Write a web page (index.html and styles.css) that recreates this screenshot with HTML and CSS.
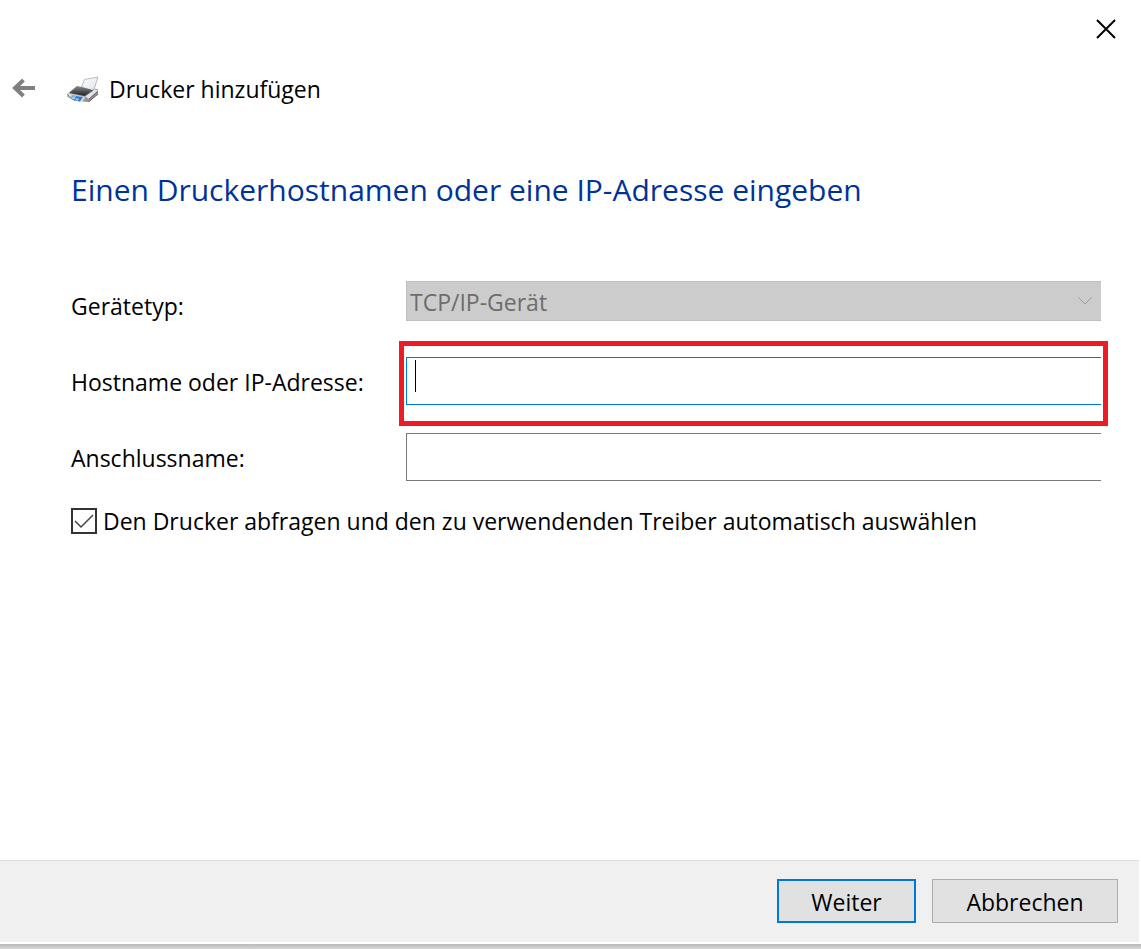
FILE: index.html
```html
<!DOCTYPE html>
<html lang="de">
<head>
    <meta charset="UTF-8">
    <meta name="viewport" content="width=device-width, initial-scale=1.0">
    <title>Drucker hinzufügen</title>
    <link rel="stylesheet" href="styles.css">
</head>
<body>

    <form class="dialog">
        <div class="title-bar">
            <button type="button" class="icon-button close" aria-label="Schließen">
                <svg width="20" height="20" viewBox="0 0 20 20">
                    <path d="M1 1L19 19M19 1L1 19" fill="none" stroke="#000" stroke-width="2"/>
                </svg>
            </button>
        </div>

        <header class="header">
            <button type="button" class="icon-button back" aria-label="Zurück">
                <svg width="24" height="20" viewBox="0 0 24 20">
                    <path d="M11.5 1L3 9L11.5 17M3 9H23" fill="none" stroke="#808080" stroke-width="4"/>
                </svg>
            </button>
            <svg class="printer" width="34" height="28" viewBox="0 0 34 28">
                <defs>
                    <linearGradient id="paper" x1="0" y1="0" x2="1" y2="1">
                        <stop offset="0" stop-color="#ffffff"/>
                        <stop offset="1" stop-color="#dfe1e4"/>
                    </linearGradient>
                    <linearGradient id="lid" x1="0" y1="0" x2="0" y2="1">
                        <stop offset="0" stop-color="#8b8b8b"/>
                        <stop offset="1" stop-color="#202020"/>
                    </linearGradient>
                    <linearGradient id="side" x1="0" y1="0" x2="1" y2="1">
                        <stop offset="0" stop-color="#eeeeee"/>
                        <stop offset="1" stop-color="#777777"/>
                    </linearGradient>
                </defs>
                <path d="M0 19L10 11L31 14L31 19L22 27L9 26L0 22Z" fill="url(#side)"/>
                <path d="M17.500 4.500L31 2L26.500 16L14.500 12Z" fill="url(#paper)" stroke="#b9bcbf"/>
                <path d="M2 18L10 11L26 15L18 21Z" fill="url(#lid)"/>
                <path d="M18 21L27 14.500L31 15L22 24Z" fill="#e2e4e6"/>
                <path d="M18 21L26.500 15M22 24L31 16.500M22 26.500L31 19" stroke="#666" fill="none"/>
                <path d="M1 19L18 22L15 27L5 25Z" fill="#dbe2e8"/>
                <path d="M5 20L9 20.500L7 23L3.500 22Z" fill="#66b9dc"/>
                <path d="M9 21L16 22L13 26.500L7 25Z" fill="#3478cc"/>
                <path d="M8 23.500L12 23.500L10.500 26Z" fill="#8de0ff"/>
                <path d="M0 19L3 22.500L8 25.500" stroke="#777" fill="none"/>
            </svg>
            <span class="wizard-name">Drucker hinzufügen</span>
        </header>

        <main class="content">
            <h1>Einen Druckerhostnamen oder eine IP-Adresse eingeben</h1>

            <div class="field">
                <label for="device-type">Gerätetyp:</label>
                <div class="control">
                    <select id="device-type" disabled>
                        <option>TCP/IP-Gerät</option>
                    </select>
                    <svg class="chevron" width="14" height="8" viewBox="0 0 14 8">
                        <path d="M.5 .5L7 7L13.500 .5" fill="none" stroke="#999"/>
                    </svg>
                </div>
            </div>

            <div class="field">
                <label for="hostname">Hostname oder IP-Adresse:</label>
                <div class="control highlight">
                    <input type="text" id="hostname" class="active">
                    <span class="caret"></span>
                </div>
            </div>

            <div class="field">
                <label for="port-name">Anschlussname:</label>
                <div class="control">
                    <input type="text" id="port-name">
                </div>
            </div>

            <div class="option">
                <span class="check">
                    <input type="checkbox" id="auto-driver" checked>
                    <svg class="tick" width="26" height="26" viewBox="0 0 26 26">
                        <path d="M4 13L10 19L22 7" fill="none" stroke="#444" stroke-width="1.500"/>
                    </svg>
                </span>
                <label for="auto-driver">Den Drucker abfragen und den zu verwendenden Treiber automatisch auswählen</label>
            </div>
        </main>

        <footer class="footer">
            <button type="submit" class="button primary">Weiter</button>
            <button type="button" class="button cancel">Abbrechen</button>
        </footer>
    </form>
    <div class="shadow"></div>

</body>
</html>
```
FILE: styles.css
```css
* {
    box-sizing: border-box;
}

body {
    margin: 0;
    background: #fff;
    color: #000;
    font-family: "Segoe UI", "Open Sans", "Noto Sans", sans-serif;
    font-size: 23px;
    line-height: 32px;
}

button, input, select {
    font: inherit;
    color: inherit;
}

.dialog {
    display: flex;
    flex-direction: column;
    min-height: calc(100vh - 5px);
    padding: 0 2px 2px 0;
    background: #fff;
}

.shadow {
    height: 5px;
    background: linear-gradient(#b8b8b8, #d8d8d8);
}

.title-bar {
    display: flex;
    justify-content: flex-end;
    padding: 19px 23px 0 0;
}

.icon-button {
    display: flex;
    padding: 0;
    border: none;
    background: none;
}

.header {
    display: flex;
    align-items: center;
    padding: 34px 12px 0;
}

.printer {
    margin: 0 8px 0 31px;
}

.content {
    flex: 1;
    padding: 63px 38px 40px 71px;
}

h1 {
    margin: 0 0 69px;
    color: #003399;
    font-size: 30px;
    font-weight: normal;
    line-height: 44px;
}

.field {
    display: grid;
    grid-template-columns: 335px 1fr;
    height: 48px;
    margin-bottom: 28px;
}

.field label {
    align-self: center;
    padding-top: 2px;
}

.control {
    position: relative;
}

select {
    display: block;
    width: 100%;
    height: 40px;
    padding: 2px 3px 0;
    border: 1px solid #bfbfbf;
    border-right: none;
    border-radius: 0;
    background: #ccc;
    appearance: none;
}

select:disabled {
    color: #6d6d6d;
    opacity: 1;
}

.chevron {
    position: absolute;
    top: 16px;
    right: 9px;
}

input[type="text"] {
    display: block;
    width: 100%;
    height: 48px;
    padding: 0 9px;
    border: 1px solid #7a7a7a;
    border-right: none;
    border-radius: 0;
    background: #fff;
    outline: none;
}

input[type="text"].active {
    border-color: #0078d7;
}

.highlight::after {
    content: "";
    position: absolute;
    inset: -16px -7px -21px;
    border: 5px solid #ed1c24;
    pointer-events: none;
}

.caret {
    position: absolute;
    top: 3px;
    left: 9px;
    width: 1px;
    height: 32px;
    background: #000;
}

.option {
    display: flex;
    align-items: center;
    gap: 6px;
    margin-top: -4px;
}

.check {
    position: relative;
    display: flex;
}

.check input {
    width: 26px;
    height: 26px;
    margin: 0;
    border: 2px solid #333;
    background: #fff;
    appearance: none;
}

.tick {
    position: absolute;
    inset: 0;
    pointer-events: none;
}

.check input:not(:checked) + .tick {
    display: none;
}

.footer {
    display: flex;
    justify-content: flex-end;
    gap: 16px;
    padding: 18px 21px 19px;
    border-top: 1px solid #dfdfdf;
    background: #f0f0f0;
}

.button {
    height: 44px;
    padding: 2px 0 0;
    border: 1px solid #adadad;
    background: #e1e1e1;
}

.primary {
    width: 139px;
    border: 2px solid #0078d7;
}

.cancel {
    width: 186px;
}
```
